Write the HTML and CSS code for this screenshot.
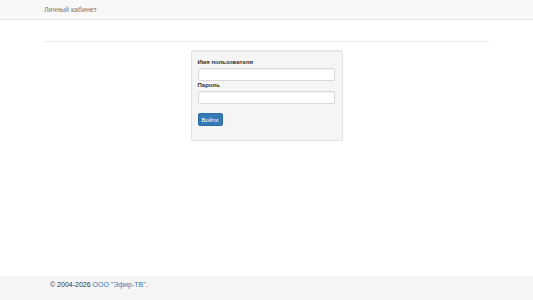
FILE: index.html
```html
<!DOCTYPE html>
<html>
    <head>
        <meta charset="utf-8">
        <title>Личный кабинет</title>
        <link rel="stylesheet" href="styles.css">
    </head>
    <body>
        <!-- верхняя панель -->
        <div class="navbar">
            <div class="container">
                <span class="brand">Личный кабинет</span>
            </div>
        </div>
        <!-- основное содержимое -->
        <div class="main">
            <div class="container">
                <hr class="line">
                <div class="well">
                    <form>
                        <div class="group">
                            <label>Имя пользователя</label>
                            <input type="text" class="field">
                        </div>
                        <div class="group">
                            <label>Пароль</label>
                            <input type="password" class="field">
                        </div>
                        <button type="button" class="btn">Войти</button>
                    </form>
                </div>
            </div>
        </div>
        <!-- подвал -->
        <div class="footer">
            <div class="container">
                <p>&copy; 2004-2026 <a href="#">ООО "Эфир-ТВ"</a>.</p>
            </div>
        </div>
    </body>
</html>
```
FILE: styles.css
```css
*{
    margin: 0;
    padding: 0;
    box-sizing: border-box;
}
html, body{
    height: 100%;
}
body{
    font-family: "Liberation Sans", Arial, sans-serif;
    color: #333;
    background-color: #fff;
    display: flex;
    flex-direction: column;
}
a{
    color: #337ab7;
    text-decoration: none;
}
.container{
    width: 445px;
    margin: 0 auto;
}
/* верхняя панель */
.navbar{
    height: 20px;
    background-color: #f8f8f8;
    border-bottom: 1px solid #e7e7e7;
}
.brand{
    display: block;
    color: #777;
    font-size: 7px;
    line-height: 19px;
}
.main{
    flex: 1;
}
.line{
    border: 0;
    border-top: 1px solid #eee;
    margin: 21px 0 8px;
}
/* форма входа */
.well{
    width: 152px;
    margin: 0 auto;
    padding: 7px 6px 14px;
    background-color: #f5f5f5;
    border: 1px solid #e3e3e3;
    border-radius: 2px;
    box-shadow: inset 0 1px 1px rgba(0, 0, 0, .05);
}
.group label{
    display: block;
    font-size: 6px;
    font-weight: bold;
    line-height: 8px;
    margin-bottom: 2px;
}
.field{
    display: block;
    width: 137px;
    height: 13px;
    border: 1px solid #d9d9d9;
    border-radius: 2px;
    background-color: #fff;
    box-shadow: inset 0 1px 1px rgba(0, 0, 0, .05);
}
.btn{
    margin-top: 9px;
    width: 25px;
    height: 13px;
    font-family: inherit;
    font-size: 6px;
    color: #fff;
    background-color: #337ab7;
    border: 1px solid #2e6da4;
    border-radius: 2px;
}
/* подвал */
.footer{
    height: 24px;
    background-color: #f5f5f5;
}
.footer p{
    padding-left: 6px;
    font-size: 7px;
    line-height: 17px;
}
```
